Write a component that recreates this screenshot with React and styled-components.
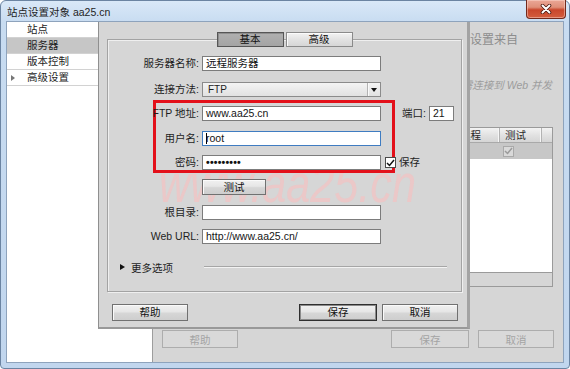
import React from "react";
import styled, { createGlobalStyle } from "styled-components";

const FONT = `"Liberation Sans", "Noto Sans CJK SC", sans-serif`;

const GlobalStyle = createGlobalStyle`
  *, *::before, *::after { box-sizing: border-box; }
  html, body { margin: 0; padding: 0; background: #ffffff; }
  body { font-family: ${FONT}; font-size: 10.5px; color: #1b1b1b; }
  #root { width: 570px; height: 369px; }
`;

/* ---------- window frame ---------- */
const Window = styled.div`
  width: 570px;
  height: 369px;
  display: flex;
  flex-direction: column;
  padding: 0 5px 5px;
  border: 1px solid #6b84a2;
  border-radius: 6px 6px 4px 4px;
  background: linear-gradient(180deg, #d9e8f8 0px, #c8dcf1 21px, #c1d6ee 100%);
`;

const TitleBar = styled.div`
  height: 20px;
  display: flex;
  align-items: flex-start;
`;

const TitleText = styled.div`
  flex: 1;
  padding: 4px 0 0 1px;
  font-size: 10.5px;
  line-height: 14px;
  color: #1e1e1e;
  white-space: nowrap;
`;

const CloseButton = styled.div`
  width: 40px;
  height: 19px;
  margin: -1px -2px 0 0;
  display: flex;
  align-items: center;
  justify-content: center;
  border: 1px solid #72291c;
  border-top: none;
  border-radius: 0 0 4px 4px;
  background: linear-gradient(180deg, #eba796 0%, #df8f79 40%, #c9462b 55%, #d35d3e 100%);
  box-shadow: inset 0 0 0 1px rgba(255, 225, 215, 0.45);
`;

const Client = styled.div`
  flex: 1;
  min-height: 0;
  position: relative;
  display: flex;
  border: 1px solid #8ea3bc;
  background: #d6d6d6;
`;

/* ---------- sidebar ---------- */
const Sidebar = styled.ul`
  width: 146px;
  flex: none;
  margin: 0;
  padding: 0;
  list-style: none;
  background: #ffffff;
  border-right: 1px solid #9d9d9d;
`;

const SideItem = styled.li`
  height: 16px;
  display: flex;
  align-items: center;
  padding-left: 4px;
  line-height: 15px;
  border-bottom: 1px solid #d2d2d2;
  background: ${(p) => (p.$active ? "#c6c6c6" : "transparent")};
  color: #1e1e1e;
`;

const SideArrow = styled.span`
  width: 16px;
  flex: none;
  display: flex;
  align-items: center;
  &::before {
    content: "";
    display: ${(p) => (p.$show ? "block" : "none")};
    border-left: 4px solid #777777;
    border-top: 3px solid transparent;
    border-bottom: 3px solid transparent;
  }
`;

/* ---------- background page ---------- */
const Main = styled.div`
  flex: 1;
  min-width: 0;
  display: flex;
  flex-direction: column;
  padding: 10px 9px 14px 9px;
`;

const InfoTitle = styled.div`
  font-size: 12px;
  line-height: 16px;
  color: #8d8d8d;
  text-align: right;
  padding-right: 36px;
  white-space: nowrap;
`;

const InfoNote = styled.div`
  margin-top: 29px;
  line-height: 16px;
  font-style: italic;
  color: #9c9c9c;
  text-align: right;
  padding-right: 2px;
  white-space: nowrap;
`;

const COLS = "112px 100px 80px 45px 42px 1fr";

const ServerTable = styled.div`
  margin-top: 34px;
  margin-right: 1px;
  height: 160px;
  display: flex;
  flex-direction: column;
  border: 1px solid #9a9a9a;
  background: #ffffff;
`;

const THead = styled.div`
  display: grid;
  grid-template-columns: ${COLS};
  height: 15px;
  background: linear-gradient(180deg, #f3f3f3 0%, #e2e2e2 50%, #d5d5d5 100%);
  border-bottom: 1px solid #a9a9a9;
`;

const TH = styled.div`
  padding-left: 5px;
  line-height: 14px;
  color: #2a2a2a;
  white-space: nowrap;
  overflow: hidden;
  border-right: 1px solid ${(p) => (p.$last ? "transparent" : "#b3b3b3")};
  box-shadow: ${(p) => (p.$last ? "none" : "inset -1px 0 0 #f6f6f6")};
`;

const TRow = styled.div`
  display: grid;
  grid-template-columns: ${COLS};
  height: 16px;
  background: #c7c7c7;
`;

const TD = styled.div`
  padding-left: ${(p) => (p.$box ? 3 : 5)}px;
  display: flex;
  align-items: center;
  color: #777777;
  white-space: nowrap;
  overflow: hidden;
`;

const TBody = styled.div`
  flex: 1;
  background: #ffffff;
`;

const TFoot = styled.div`
  height: 14px;
  background: #d6d6d6;
  border-top: 1px solid #9a9a9a;
`;

const BgButtons = styled.div`
  margin-top: auto;
  display: flex;
  height: 18px;
`;

const DisabledButton = styled.div`
  width: ${(p) => p.$w}px;
  height: 18px;
  margin-left: ${(p) => p.$ml || 0};
  display: flex;
  align-items: center;
  justify-content: center;
  border: 1px solid #adadad;
  background: #d9d9d9;
  color: #a4a4a4;
`;

/* ---------- modal dialog ---------- */
const Modal = styled.div`
  position: absolute;
  left: 91px;
  top: 0;
  width: 372px;
  height: 307px;
  display: flex;
  flex-direction: column;
  padding-top: 17px;
  background: #d6d6d6;
  border-left: 1px solid #8f8f8f;
  border-right: 3px solid #a3a3a3;
  border-bottom: 2px solid #999999;
`;

const Watermark = styled.div`
  position: absolute;
  left: 60px;
  top: 134px;
  z-index: 1;
  font-family: "Liberation Sans", sans-serif;
  font-style: italic;
  font-size: 54px;
  line-height: 54px;
  color: rgba(255, 186, 186, 0.5);
  white-space: nowrap;
  transform: scaleX(0.8);
  transform-origin: left top;
  pointer-events: none;
`;

const RedFrame = styled.div`
  position: absolute;
  left: 54px;
  top: 78px;
  width: 242px;
  height: 73px;
  z-index: 1;
  border: 3px solid #e3101a;
  pointer-events: none;
`;

const GroupBox = styled.div`
  position: relative;
  z-index: 2;
  height: 253px;
  margin: 0 5px 0 8px;
  display: flex;
  flex-direction: column;
  border: 1px solid #a3a3a3;
  box-shadow: inset 1px 1px 0 #efefef, 1px 1px 0 #efefef;
`;

const Tabs = styled.div`
  margin-top: -8px;
  display: flex;
  justify-content: center;
  gap: 2px;
`;

const Tab = styled.div`
  width: 67px;
  height: 15px;
  display: flex;
  align-items: center;
  justify-content: center;
  line-height: 13px;
  color: #111111;
  border: 1px solid ${(p) => (p.$active ? "#565656" : "#8a8a8a")};
  background: ${(p) =>
    p.$active
      ? "linear-gradient(180deg, #b0b0b0 0%, #a4a4a4 100%)"
      : "linear-gradient(180deg, #f2f2f2 0%, #e2e2e2 50%, #d6d6d6 100%)"};
  box-shadow: ${(p) => (p.$active ? "inset 1px 1px 0 #8e8e8e" : "inset 1px 1px 0 #fbfbfb")};
`;

const Form = styled.div`
  margin-top: 9px;
  display: flex;
  flex-direction: column;
  gap: 9px;
`;

const Row = styled.div`
  display: flex;
  align-items: center;
  height: ${(p) => p.$h || 15}px;
  margin-top: ${(p) => p.$mt || 0}px;
`;

const Label = styled.div`
  width: 91px;
  flex: none;
  text-align: right;
  line-height: 15px;
  white-space: nowrap;
  color: #1e1e1e;
`;

const Field = styled.div`
  width: ${(p) => p.$w || 179}px;
  height: 15px;
  flex: none;
  margin-left: ${(p) => (p.$ml === undefined ? 3 : p.$ml)}px;
  padding: 0 3px;
  display: flex;
  align-items: center;
  border: 1px solid ${(p) => (p.$focus ? "#3f7cc1" : "#7c7c7c")};
  background: #ffffff;
  line-height: 13px;
  color: #141414;
  white-space: nowrap;
  overflow: hidden;
`;

const Caret = styled.span`
  display: inline-block;
  width: 1px;
  height: 11px;
  margin-right: -1px;
  background: #000000;
`;

const Dots = styled.span`
  font-weight: bold;
  letter-spacing: 0.2px;
  color: #111111;
`;

const Select = styled.div`
  width: 179px;
  height: 15px;
  margin-left: 3px;
  display: flex;
  border: 1px solid #8b8b8b;
  background: linear-gradient(180deg, #f4f4f4 0%, #e1e1e1 100%);
`;

const SelectValue = styled.div`
  flex: 1;
  padding-left: 5px;
  line-height: 13px;
  font-size: 10px;
  color: #1e1e1e;
`;

const SelectArrow = styled.div`
  width: 13px;
  flex: none;
  display: flex;
  align-items: center;
  justify-content: center;
  border-left: 1px solid #b3b3b3;
  box-shadow: inset 1px 0 0 #fafafa;
  &::after {
    content: "";
    border-left: 3px solid transparent;
    border-right: 3px solid transparent;
    border-top: 4px solid #111111;
  }
`;

const SideLabel = styled.div`
  margin-left: ${(p) => p.$ml}px;
  line-height: 15px;
  white-space: nowrap;
  color: #1e1e1e;
`;

const CheckBox = styled.div`
  width: 11px;
  height: 11px;
  flex: none;
  margin-left: ${(p) => p.$ml || 0}px;
  display: flex;
  align-items: center;
  justify-content: center;
  border: 1px solid ${(p) => (p.$disabled ? "#a9a9a9" : "#4a4a4a")};
  background: ${(p) => (p.$disabled ? "#d9d9d9" : "#ffffff")};
`;

const PushButton = styled.div`
  width: ${(p) => p.$w}px;
  height: ${(p) => p.$h || 17}px;
  flex: none;
  margin-left: ${(p) => p.$ml || 0};
  display: flex;
  align-items: center;
  justify-content: center;
  border: 1px solid ${(p) => (p.$default ? "#2f2f2f" : "#717171")};
  box-shadow: ${(p) => (p.$default ? "inset 0 0 0 1px #8a8a8a" : "inset 1px 1px 0 #fafafa")};
  background: linear-gradient(180deg, #f1f1f1 0%, #e6e6e6 45%, #d6d6d6 55%, #cecece 100%);
  color: #111111;
  line-height: 13px;
`;

const MoreRow = styled.div`
  display: flex;
  align-items: center;
  height: 16px;
  margin-top: 6px;
`;

const MoreToggle = styled.div`
  width: 96px;
  flex: none;
  display: flex;
  align-items: center;
  padding-left: 12px;
  gap: 6px;
  color: #1e1e1e;
  &::before {
    content: "";
    border-left: 5px solid #111111;
    border-top: 3.5px solid transparent;
    border-bottom: 3.5px solid transparent;
  }
`;

const Divider = styled.div`
  width: 243px;
  height: 2px;
  border-top: 1px solid #a6a6a6;
  border-bottom: 1px solid #f3f3f3;
`;

const DialogButtons = styled.div`
  margin: 12px 9px 0 13px;
  display: flex;
`;

const Tick = ({ color }) => (
  <svg width="9" height="8" viewBox="0 0 9 8">
    <polyline points="1,4 3.5,6.5 8,1" fill="none" stroke={color} strokeWidth="1.5" />
  </svg>
);

const sideItems = [
  { label: "站点" },
  { label: "服务器", active: true },
  { label: "版本控制" },
  { label: "高级设置", arrow: true },
];

export default function App() {
  return (
    <>
      <GlobalStyle />
      <Window>
        <TitleBar>
          <TitleText>站点设置对象 aa25.cn</TitleText>
          <CloseButton aria-label="关闭">
            <svg width="12" height="10" viewBox="0 0 12 10">
              <path d="M2.5 1.5 L9.5 8.5 M9.5 1.5 L2.5 8.5" stroke="#4a1810" strokeWidth="3.6" strokeLinecap="round" />
              <path d="M2.5 1.5 L9.5 8.5 M9.5 1.5 L2.5 8.5" stroke="#ffffff" strokeWidth="2" strokeLinecap="round" />
            </svg>
          </CloseButton>
        </TitleBar>
        <Client>
          <Sidebar>
            {sideItems.map((it) => (
              <SideItem key={it.label} $active={it.active}>
                <SideArrow $show={it.arrow} />
                {it.label}
              </SideItem>
            ))}
          </Sidebar>

          <Main>
            <InfoTitle>此对话框中的设置来自</InfoTitle>
            <InfoNote>仅在需连接到 Web 并发</InfoNote>
            <ServerTable>
              <THead>
                <TH>名称</TH>
                <TH>地址</TH>
                <TH>连接</TH>
                <TH>远程</TH>
                <TH>测试</TH>
                <TH $last />
              </THead>
              <TRow>
                <TD>远程服务器</TD>
                <TD>www.aa25.cn</TD>
                <TD>FTP</TD>
                <TD />
                <TD $box>
                  <CheckBox $disabled>
                    <Tick color="#9a9a9a" />
                  </CheckBox>
                </TD>
                <TD />
              </TRow>
              <TBody />
              <TFoot />
            </ServerTable>
            <BgButtons>
              <DisabledButton $w={76}>帮助</DisabledButton>
              <DisabledButton $w={78} $ml="auto">保存</DisabledButton>
              <DisabledButton $w={76} $ml="9px">取消</DisabledButton>
            </BgButtons>
          </Main>

          <Modal>
            <Watermark>www.aa25.cn</Watermark>
            <RedFrame />
            <GroupBox>
              <Tabs>
                <Tab $active>基本</Tab>
                <Tab>高级</Tab>
              </Tabs>
              <Form>
                <Row>
                  <Label>服务器名称:</Label>
                  <Field>远程服务器</Field>
                </Row>
                <Row $mt={2}>
                  <Label>连接方法:</Label>
                  <Select>
                    <SelectValue>FTP</SelectValue>
                    <SelectArrow />
                  </Select>
                </Row>
                <Row>
                  <Label>FTP 地址:</Label>
                  <Field>www.aa25.cn</Field>
                  <SideLabel $ml={21}>端口:</SideLabel>
                  <Field $w={25} $ml={3}>21</Field>
                </Row>
                <Row $mt={1}>
                  <Label>用户名:</Label>
                  <Field $focus>
                    <Caret />
                    root
                  </Field>
                </Row>
                <Row>
                  <Label>密码:</Label>
                  <Field>
                    <Dots>•••••••••</Dots>
                  </Field>
                  <CheckBox $ml={4}>
                    <Tick color="#111111" />
                  </CheckBox>
                  <SideLabel $ml={3}>保存</SideLabel>
                </Row>
                <Row $h={16}>
                  <PushButton $w={64} $h={16} $ml="94px">测试</PushButton>
                </Row>
                <Row $mt={1}>
                  <Label>根目录:</Label>
                  <Field />
                </Row>
                <Row>
                  <Label>Web URL:</Label>
                  <Field>http://www.aa25.cn/</Field>
                </Row>
                <MoreRow>
                  <MoreToggle>更多选项</MoreToggle>
                  <Divider />
                </MoreRow>
              </Form>
            </GroupBox>
            <DialogButtons>
              <PushButton $w={76}>帮助</PushButton>
              <PushButton $w={78} $ml="auto" $default>保存</PushButton>
              <PushButton $w={76} $ml="5px">取消</PushButton>
            </DialogButtons>
          </Modal>
        </Client>
      </Window>
    </>
  );
}
